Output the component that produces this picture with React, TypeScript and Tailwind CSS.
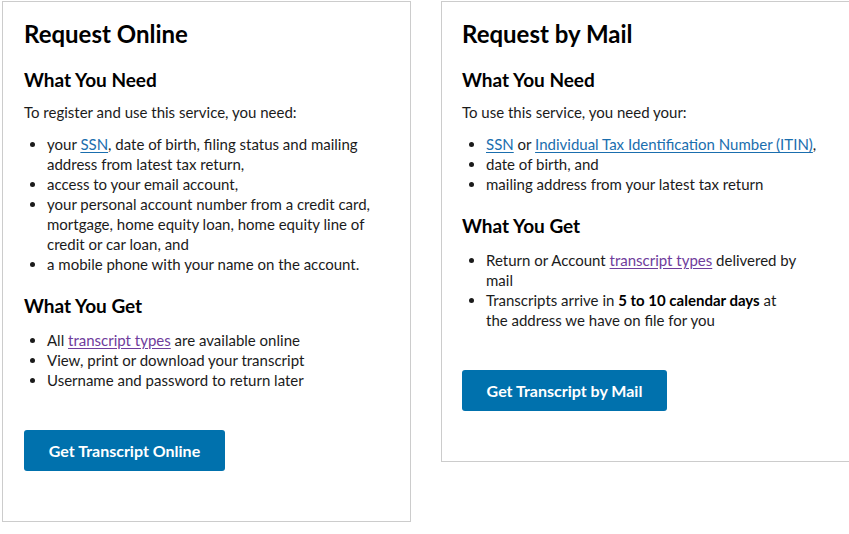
const Link = ({ children, visited }: { children: React.ReactNode; visited?: boolean }) => (
  <a
    href="#"
    className={visited ? "text-[#6f3c9c] underline underline-offset-2" : "text-[#1a6eae] underline underline-offset-2"}
  >
    {children}
  </a>
);

const App = () => {
  return (
    <div
      className="flex items-start gap-[30px] pl-[2px] pt-[1px] bg-white min-h-[534px] text-[#1b1b1b]"
      style={{ fontFamily: "Lato, 'Liberation Sans', sans-serif" }}
    >
      {/* online card */}
      <div className="w-[409px] shrink-0 border border-[#cccccc] px-[21px] pt-[17px] pb-[50px]">
        <h2 className="text-[24px] leading-[30px] font-bold text-black">Request Online</h2>
        <h3 className="mt-[19px] text-[19px] leading-[24px] font-bold text-black">What You Need</h3>
        <p className="mt-[10px] text-[15px] leading-[20px]">To register and use this service, you need:</p>
        <ul className="mt-[12px] list-disc pl-[23px] text-[15px] leading-[20px]">
          <li>
            your <Link>SSN</Link>, date of birth, filing status and mailing address from latest tax return,
          </li>
          <li>access to your email account,</li>
          <li>
            your personal account number from a credit card, mortgage, home equity loan, home equity line of
            credit or car loan, and
          </li>
          <li>a mobile phone with your name on the account.</li>
        </ul>
        <h3 className="mt-[20px] text-[19px] leading-[24px] font-bold text-black">What You Get</h3>
        <ul className="mt-[12px] list-disc pl-[23px] text-[15px] leading-[20px]">
          <li>
            All <Link visited>transcript types</Link> are available online
          </li>
          <li>View, print or download your transcript</li>
          <li>Username and password to return later</li>
        </ul>
        <button className="mt-[40px] h-[41px] w-[201px] rounded-[3px] bg-[#0071ad] text-[16px] font-bold text-white">
          Get Transcript Online
        </button>
      </div>

      {/* mail card */}
      <div className="w-[409px] shrink-0 border border-[#cccccc] px-[20px] pt-[17px] pb-[50px]">
        <h2 className="text-[24px] leading-[30px] font-bold text-black">Request by Mail</h2>
        <h3 className="mt-[19px] text-[19px] leading-[24px] font-bold text-black">What You Need</h3>
        <p className="mt-[10px] text-[15px] leading-[20px]">To use this service, you need your:</p>
        <ul className="mt-[12px] list-disc pl-[24px] text-[15px] leading-[20px]">
          <li>
            <Link>SSN</Link> or <Link>Individual Tax Identification Number (ITIN)</Link>,
          </li>
          <li>date of birth, and</li>
          <li>mailing address from your latest tax return</li>
        </ul>
        <h3 className="mt-[20px] text-[19px] leading-[24px] font-bold text-black">What You Get</h3>
        <ul className="mt-[12px] list-disc pl-[24px] pr-[29px] text-[15px] leading-[20px]">
          <li>
            Return or Account <Link visited>transcript types</Link> delivered by mail
          </li>
          <li>
            Transcripts arrive in <b className="font-bold text-black">5 to 10 calendar days</b> at the address we have
            on file for you
          </li>
        </ul>
        <button className="mt-[40px] h-[41px] w-[205px] rounded-[3px] bg-[#0071ad] text-[16px] font-bold text-white">
          Get Transcript by Mail
        </button>
      </div>
    </div>
  );
};

export default App;
